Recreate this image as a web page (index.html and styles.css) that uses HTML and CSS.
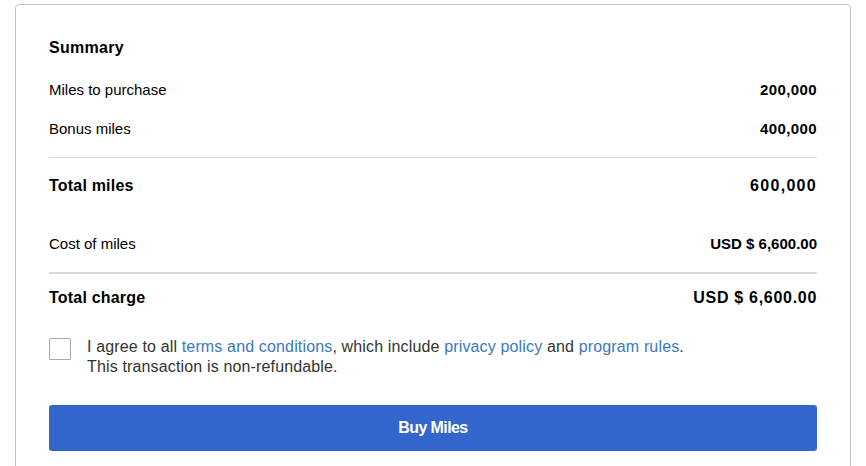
FILE: index.html
```html
<!DOCTYPE html>
<html lang="en">
<head>
    <meta charset="UTF-8">
    <meta name="viewport" content="width=device-width, initial-scale=1.0">
    <title>Summary</title>
    <link rel="stylesheet" href="styles.css">
</head>
<body>
    <main class="card">
        <h3 class="title">Summary</h3>
        <div class="row first">
            <span>Miles to purchase</span>
            <span class="value">200,000</span>
        </div>
        <div class="row">
            <span>Bonus miles</span>
            <span class="value">400,000</span>
        </div>
        <hr class="divider">
        <div class="row total">
            <span>Total miles</span>
            <span class="amount">600,000</span>
        </div>
        <div class="row cost">
            <span>Cost of miles</span>
            <span class="value price">USD $ 6,600.00</span>
        </div>
        <hr class="divider thick">
        <div class="row total charge">
            <span>Total charge</span>
            <span class="amount price">USD $ 6,600.00</span>
        </div>
        <label class="agree">
            <input type="checkbox" class="checkbox">
            <span class="agree-text">I agree to all <a href="#">terms and conditions</a>, which include <a href="#">privacy policy</a> and <a href="#">program rules</a>.<br>This transaction is non-refundable.</span>
        </label>
        <button class="button">Buy Miles</button>
    </main>
</body>
</html>
```

FILE: styles.css
```css
body {
    margin: 0;
    font-family: 'Liberation Sans', Arial, sans-serif;
    background-color: white;
    color: #000;
}

.card {
    margin: 4px 15px 0;
    padding: 33px 33px 30px;
    border: 1px solid #c4c4c4;
    border-radius: 4px;
    height: 500px;
}

.title {
    margin: 0;
    font-size: 16px;
    line-height: 20px;
    font-weight: bold;
    letter-spacing: 0.3px;
}

.row {
    display: flex;
    justify-content: space-between;
    align-items: center;
    height: 20px;
    font-size: 15px;
    margin-top: 19px;
}

.row.first {
    margin-top: 21px;
}

.row .value {
    font-weight: bold;
    letter-spacing: 0.4px;
}

.row .value.price {
    letter-spacing: 0;
}

.divider {
    margin: 19px 0 0;
    border: none;
    border-top: 1px solid #d9d9d9;
}

.divider.thick {
    border-top-width: 2px;
}

.row.total {
    margin-top: 18px;
    font-size: 16px;
    font-weight: bold;
    letter-spacing: 0.2px;
}

.row .amount {
    letter-spacing: 1.3px;
}

.row .amount.price {
    letter-spacing: 0.7px;
}

.row.cost {
    margin-top: 37px;
}

.row.charge {
    margin-top: 14px;
}

.agree {
    display: flex;
    align-items: flex-start;
    gap: 16px;
    margin-top: 29px;
    font-size: 16px;
    line-height: 20px;
    letter-spacing: 0.15px;
    color: #333;
}

.checkbox {
    appearance: none;
    margin: 1px 0 0;
    width: 22px;
    height: 22px;
    border: 1px solid #aaa;
    border-radius: 1px;
    background: white;
    flex-shrink: 0;
}

.agree-text a {
    color: #3a78c3;
    text-decoration: none;
}

.button {
    display: block;
    width: 100%;
    height: 46px;
    margin-top: 28px;
    border: none;
    border-radius: 3px;
    background-color: #3366cc;
    color: white;
    font-family: inherit;
    font-size: 16px;
    font-weight: bold;
    letter-spacing: -0.6px;
}
```
